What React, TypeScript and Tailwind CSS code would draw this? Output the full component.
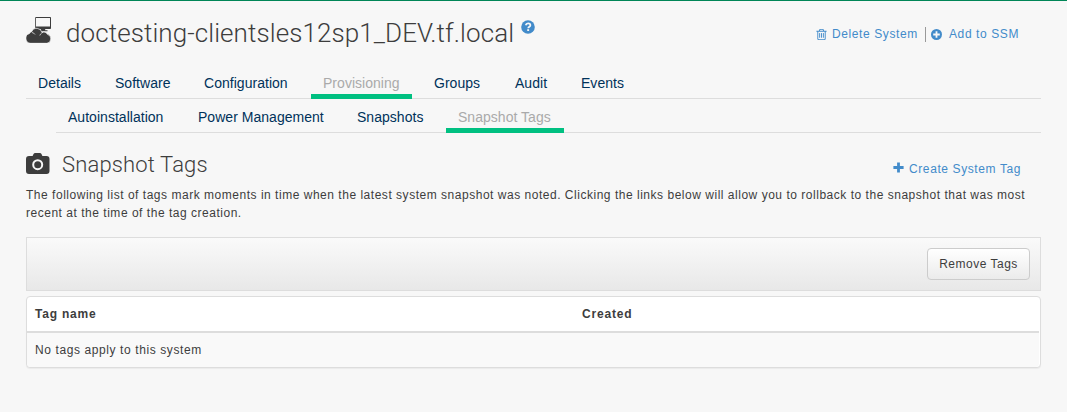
import React from "react";

type Tab = { label: string; box: string; active?: boolean };

const mainTabs: Tab[] = [
  { label: "Details", box: "w-[67px]" },
  { label: "Software", box: "w-[79px]" },
  { label: "Configuration", box: "w-[109px]" },
  { label: "Provisioning", box: "w-[101px]", active: true },
  { label: "Groups", box: "w-[71px]" },
  { label: "Audit", box: "w-[56px]" },
  { label: "Events", box: "w-[67px]" },
];

const subTabs: Tab[] = [
  { label: "Autoinstallation", box: "w-[120px]" },
  { label: "Power Management", box: "w-[149px]" },
  { label: "Snapshots", box: "w-[91px]" },
  { label: "Snapshot Tags", box: "w-[118px]", active: true },
];

function Tabs({ tabs }: { tabs: Tab[] }) {
  return (
    <ul className="flex h-full gap-[10px]">
      {tabs.map((t) => (
        <li
          key={t.label}
          className={`-mb-px h-[34px] border-b-[5px] pl-3 whitespace-nowrap ${t.box} ${
            t.active ? "border-[#00c081] text-[#aaaaaa]" : "border-transparent text-[#00325a]"
          }`}
        >
          <a className="block pt-2 text-[14px] leading-[20px] tracking-[0.03px]">{t.label}</a>
        </li>
      ))}
    </ul>
  );
}

function TrashIcon() {
  return (
    <svg viewBox="0 0 1792 1792" className="size-[13px]" fill="currentColor">
      <path d="M704 736v576q0 14-9 23t-23 9h-64q-14 0-23-9t-9-23V736q0-14 9-23t23-9h64q14 0 23 9t9 23zm256 0v576q0 14-9 23t-23 9h-64q-14 0-23-9t-9-23V736q0-14 9-23t23-9h64q14 0 23 9t9 23zm256 0v576q0 14-9 23t-23 9h-64q-14 0-23-9t-9-23V736q0-14 9-23t23-9h64q14 0 23 9t9 23zm128 724V512H448v948q0 22 7 40.500t14.500 27 10.500 8.500h832q3 0 10.500-8.500t14.500-27 7-40.500zM672 384h448l-48-117q-7-9-17-11H738q-10 2-17 11zm928 32v64q0 14-9 23t-23 9h-96v948q0 83-47 143.500t-113 60.500H480q-66 0-113-58.500T320 1464V512h-96q-14 0-23-9t-9-23v-64q0-14 9-23t23-9h309l70-167q15-37 54-63t79-26h320q40 0 79 26t54 63l70 167h309q14 0 23 9t9 23z" />
    </svg>
  );
}

function PlusCircleIcon() {
  return (
    <svg viewBox="0 0 11 11" className="ml-[5px] size-[11px]">
      <circle cx="5.5" cy="5.5" r="5.500" fill="currentColor" />
      <path d="M5.500 2.200v6.600M2.200 5.500h6.600" stroke="#f7f7f7" strokeWidth="1.800" />
    </svg>
  );
}

function PlusIcon() {
  return (
    <svg viewBox="0 0 11 11" className="-mt-[3px] size-[11px]" stroke="currentColor" strokeWidth="2.800">
      <path d="M5.500 .4v10.200M.4 5.500h10.200" />
    </svg>
  );
}

function HelpIcon() {
  return (
    <svg viewBox="0 0 14 14" className="mt-[19px] ml-[7px] size-[14px] text-[#428bca]">
      <circle cx="7" cy="7" r="6.800" fill="currentColor" />
      <path
        d="M4.700 5.300c.3-1.300 1.200-2 2.400-2 1.300 0 2.300.8 2.300 1.900 0 1.500-2.200 1.500-2.200 3.100"
        fill="none"
        stroke="#f7f7f7"
        strokeWidth="1.700"
      />
      <path d="M6.200 9.200h1.900v1.800H6.200z" fill="#f7f7f7" />
    </svg>
  );
}

function CameraIcon() {
  return (
    <svg viewBox="0 0 24 21" className="mt-[20px] h-[21px] w-6">
      <path
        fill="currentColor"
        d="M3 3h3.600l.8-1.800Q8 0 9.200 0h4.600q1.200 0 1.800 1.200l.8 1.800H20.500q3 0 3 3v12q0 3-3 3H3q-3 0-3-3V6q0-3 3-3z"
      />
      <circle cx="11.700" cy="11.700" r="4.500" fill="none" stroke="#f7f7f7" strokeWidth="2" />
    </svg>
  );
}

function SystemIcon() {
  return (
    <svg viewBox="0 0 26 26" className="h-[26px] w-[26px]" fill="currentColor">
      <path
        fillRule="evenodd"
        d="M10 0h14.200q.8 0 .8.800v10.400q0 .8-.8.800h-5v1.200h2.300v1h-8.500v-1h2V12H10q-.8 0-.8-.8V.8q0-.8.800-.8zm0 1v8.500h14V1z"
      />
      <path
        stroke="#f7f7f7"
        strokeWidth="0.700"
        d="M4.700 26.300a5 5 0 0 1-1.200-9.800 3 3 0 0 1 2.200-1.800 5.400 5.400 0 0 1 10.300 1 3.600 3.600 0 0 1 5.400 1.600 4.600 4.600 0 0 1-.5 9z"
      />
      <path
        d="M6 15.500q2 .3 3 2M15.700 16.200q-1.500.8-1.900 2.300"
        fill="none"
        stroke="#f7f7f7"
        strokeWidth="0.700"
      />
    </svg>
  );
}

export default function App() {
  return (
    <div className="h-[412px] w-[1067px] overflow-hidden border-t border-[#008657] bg-[#f7f7f7] px-[26px] font-['Liberation_Sans',sans-serif] text-[12px] text-[#3d3d3d]">
      <header className="flex h-[63px] justify-between">
        <div className="flex">
          <span className="mt-4 w-10">
            <SystemIcon />
          </span>
          <h1 className="mt-[16px] h-8 font-[Roboto,sans-serif] text-[26px] leading-[32px] font-light tracking-[0.085px] whitespace-nowrap">
            doctesting-clientsles12sp1_DEV.tf.local
          </h1>
          <HelpIcon />
        </div>
        <div className="mt-6 mr-[20px] flex h-[18px] items-center whitespace-nowrap text-[#428bca]">
          <TrashIcon />
          <a className="ml-1 w-[86px] tracking-[0.6px]">Delete System</a>
          <span className="ml-[7px] h-[15px] w-px bg-[#999999]" />
          <PlusCircleIcon />
          <a className="ml-[7px] w-[72px] tracking-[0.6px]">Add to SSM</a>
        </div>
      </header>

      <nav>
        <div className="h-[35px] border-b border-[#dddddd] pt-px">
          <Tabs tabs={mainTabs} />
        </div>
        <div className="ml-[30px] h-[34px] border-b border-[#dddddd]">
          <Tabs tabs={subTabs} />
        </div>
      </nav>

      <main>
        <div className="flex h-[53px] justify-between">
          <div className="flex">
            <CameraIcon />
            <h2 className="mt-[18px] ml-3 font-[Roboto,sans-serif] text-[22px] leading-[28px] font-light tracking-[0.15px] whitespace-nowrap">
              Snapshot Tags
            </h2>
          </div>
          <div className="mt-[27px] mr-[20px] flex h-[18px] items-center whitespace-nowrap text-[#428bca]">
            <PlusIcon />
            <a className="ml-[5px] w-[112px] tracking-[0.6px]">Create System Tag</a>
          </div>
        </div>
        <p className="h-[51px] leading-[18px] tracking-[0.52px] whitespace-nowrap">
          The following list of tags mark moments in time when the latest system snapshot was noted. Clicking the links below will allow you to rollback to the snapshot that was most
          <br />
          recent at the time of the tag creation.
        </p>

        <div className="flex h-[54px] justify-end border border-[#dddddd] bg-linear-to-b from-[#fafafa] to-[#e8e8e8] p-[10px]">
          <button className="h-8 w-[103px] rounded border border-[#cccccc] bg-linear-to-b from-white to-[#ebebeb] tracking-[0.5px] whitespace-nowrap">
            Remove Tags
          </button>
        </div>

        <section className="mt-[5px] h-[72px] rounded border border-[#dddddd] bg-white pr-px shadow-[0_1px_1px_rgba(0,0,0,0.05)]">
          <div className="flex h-[36px] border-b-2 border-[#dddddd] pl-2 leading-[34px] font-bold tracking-[0.8px]">
            <div className="w-[547px]">Tag name</div>
            <div>Created</div>
          </div>
          <div className="h-[34px] rounded-b bg-[#f9f9f9] pl-2 leading-[34px] tracking-[0.6px]">
            No tags apply to this system
          </div>
        </section>
      </main>
    </div>
  );
}
